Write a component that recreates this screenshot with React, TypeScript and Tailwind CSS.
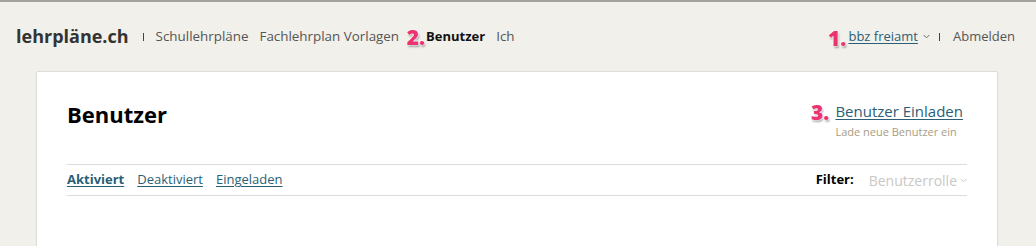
import React from "react";

function Badge({ n, gap }: { n: string; gap: string }) {
  return (
    <span
      className={`absolute right-full top-1/2 -translate-y-[45%] ${gap} text-[21px] font-extrabold text-[#ea3370] [text-shadow:0_0_1px_#fff,0_0_2px_#fff,0_0_2px_#fff,1px_2px_2px_rgba(0,0,0,0.35)] leading-none no-underline`}
    >
      {n}
    </span>
  );
}

function Chevron({ className }: { className?: string }) {
  return (
    <svg viewBox="0 0 8 5" className={className} fill="none" stroke="currentColor" strokeWidth="1.1">
      <path d="M0.8 0.8 L4 4 L7.2 0.8" />
    </svg>
  );
}

export default function App() {
  return (
    <div className="min-h-[246px] bg-[#f1f0ea] border-t-2 border-[#a3a29d] font-['Open_Sans',sans-serif] overflow-hidden">
      {/* Top navigation */}
      <div className="flex items-center justify-between h-[69px] pl-4 pr-[21px]">
        <div className="flex items-center">
          <span className="text-[18px] font-bold text-[#333]">lehrpläne.ch</span>
          <span className="ml-[14px] mr-[12px] h-[8px] w-px bg-[#444]" />
          <nav className="flex items-center text-[13.4px] text-[#555]">
            <a className="mr-[11px]">Schullehrpläne</a>
            <a>Fachlehrplan Vorlagen</a>
            <a className="relative ml-[27px] mr-[11px] text-[13px] font-bold text-[#111]">
              <Badge n="2." gap="mr-[1px]" />
              Benutzer
            </a>
            <a>Ich</a>
          </nav>
        </div>
        <div className="flex items-center text-[13px]">
          <a className="relative flex items-center text-[#2a5f75]">
            <Badge n="1." gap="mr-[2px]" />
            <span className="underline underline-offset-2">bbz freiamt</span>
            <Chevron className="ml-[5px] w-[7px] h-[5px] text-[#666]" />
          </a>
          <span className="ml-[9px] mr-[13px] h-[8px] w-px bg-[#444]" />
          <a className="text-[#555]">Abmelden</a>
        </div>
      </div>

      {/* Card */}
      <div className="ml-[36px] w-[962px] min-h-[180px] bg-white border border-[#deddd8] rounded-[2px] shadow-[0_1px_2px_rgba(0,0,0,0.06)] px-[30px] pt-[27px]">
        <div className="flex justify-between">
          <h1 className="text-[22px] leading-[30px] font-bold text-black">Benutzer</h1>
          <div className="flex flex-col items-start pt-[3px] mr-[4px]">
            <a className="relative text-[15px] leading-[18px] text-[#2a5f75] underline underline-offset-2">
              <Badge n="3." gap="mr-[6px]" />
              Benutzer Einladen
            </a>
            <span className="mt-[5px] text-[11px] leading-[14px] text-[#a89c82]">Lade neue Benutzer ein</span>
          </div>
        </div>

        <div className="mt-[25px] flex items-center justify-between h-[32px] border-t border-b border-[#dcdcdc] text-[13px]">
          <div className="flex items-center gap-[13px] text-[#2a5f75]">
            <a className="font-bold underline underline-offset-2">Aktiviert</a>
            <a className="underline underline-offset-2">Deaktiviert</a>
            <a className="underline underline-offset-2">Eingeladen</a>
          </div>
          <div className="flex items-center">
            <span className="font-bold text-black mr-[15px]">Filter:</span>
            <span className="text-[14px] text-[#c8c8c8]">Benutzerrolle</span>
            <Chevron className="ml-[3px] w-[7px] h-[5px] text-[#c8c8c8]" />
          </div>
        </div>
      </div>
    </div>
  );
}
